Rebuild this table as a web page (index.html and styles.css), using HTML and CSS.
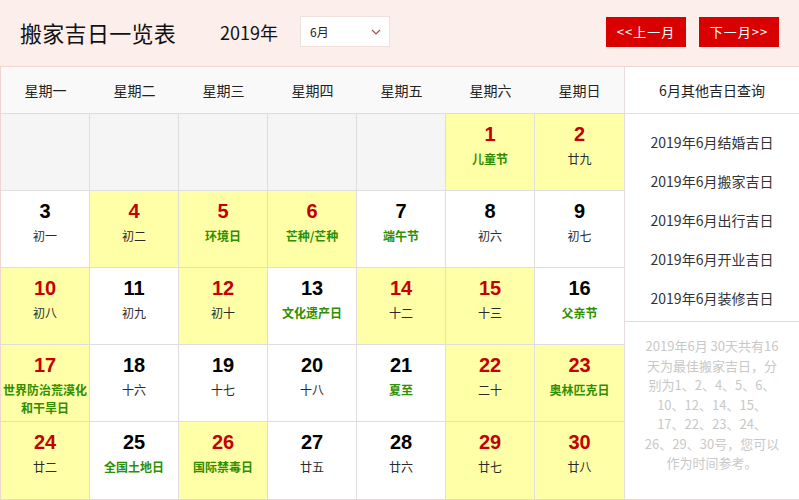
FILE: index.html
```html
<!DOCTYPE html>
<html lang="zh-CN">
<head>
<meta charset="utf-8">
<title>搬家吉日一览表</title>
<link rel="stylesheet" href="styles.css">
</head>
<body>
<div class="top">
  <h1 class="title">搬家吉日一览表</h1>
  <span class="year">2019年</span>
  <div class="select"><span>6月</span>
    <svg width="10" height="6" viewBox="0 0 10 6"><path d="M1 1 L5 5 L9 1" fill="none" stroke="#a5504c" stroke-width="1.2"/></svg>
  </div>
  <div class="nav">
    <a class="btn">&lt;&lt;上一月</a>
    <a class="btn">下一月&gt;&gt;</a>
  </div>
</div>
<div class="main">
  <div class="cal">
    <div class="wk">星期一</div><div class="wk">星期二</div><div class="wk">星期三</div><div class="wk">星期四</div><div class="wk">星期五</div><div class="wk">星期六</div><div class="wk">星期日</div>

    <div class="d empty"></div><div class="d empty"></div><div class="d empty"></div><div class="d empty"></div><div class="d empty"></div>
    <div class="d good"><b>1</b><span class="fest">儿童节</span></div>
    <div class="d good"><b>2</b><span>廿九</span></div>

    <div class="d"><b>3</b><span>初一</span></div>
    <div class="d good"><b>4</b><span>初二</span></div>
    <div class="d good"><b>5</b><span class="fest">环境日</span></div>
    <div class="d good"><b>6</b><span class="fest">芒种/芒种</span></div>
    <div class="d"><b>7</b><span class="fest">端午节</span></div>
    <div class="d"><b>8</b><span>初六</span></div>
    <div class="d"><b>9</b><span>初七</span></div>

    <div class="d good"><b>10</b><span>初八</span></div>
    <div class="d"><b>11</b><span>初九</span></div>
    <div class="d good"><b>12</b><span>初十</span></div>
    <div class="d"><b>13</b><span class="fest">文化遗产日</span></div>
    <div class="d good"><b>14</b><span>十二</span></div>
    <div class="d good"><b>15</b><span>十三</span></div>
    <div class="d"><b>16</b><span class="fest">父亲节</span></div>

    <div class="d good"><b>17</b><span class="fest">世界防治荒漠化和干旱日</span></div>
    <div class="d"><b>18</b><span>十六</span></div>
    <div class="d"><b>19</b><span>十七</span></div>
    <div class="d"><b>20</b><span>十八</span></div>
    <div class="d"><b>21</b><span class="fest">夏至</span></div>
    <div class="d good"><b>22</b><span>二十</span></div>
    <div class="d good"><b>23</b><span class="fest">奥林匹克日</span></div>

    <div class="d good"><b>24</b><span>廿二</span></div>
    <div class="d"><b>25</b><span class="fest">全国土地日</span></div>
    <div class="d good"><b>26</b><span class="fest">国际禁毒日</span></div>
    <div class="d"><b>27</b><span>廿五</span></div>
    <div class="d"><b>28</b><span>廿六</span></div>
    <div class="d good"><b>29</b><span>廿七</span></div>
    <div class="d good"><b>30</b><span>廿八</span></div>
  </div>
  <aside class="side">
    <div class="side-head">6月其他吉日查询</div>
    <ul class="links">
      <li>2019年6月结婚吉日</li>
      <li>2019年6月搬家吉日</li>
      <li>2019年6月出行吉日</li>
      <li>2019年6月开业吉日</li>
      <li>2019年6月装修吉日</li>
    </ul>
    <p class="note">2019年6月 30天共有16<br>天为最佳搬家吉日，分<br>别为1、2、4、5、6、<br>10、12、14、15、<br>17、22、23、24、<br>26、29、30号，您可以<br>作为时间参考。</p>
  </aside>
</div>
</body>
</html>
```

FILE: styles.css
```css
* { box-sizing: border-box; }
body {
  margin: 0;
  background: #fbeeeb;
  font-family: "Noto Sans CJK SC", "Noto Sans", sans-serif;
  color: #222;
}
.top {
  height: 66px;
  display: flex;
  align-items: center;
  padding: 0 20px 3px;
}
.title {
  margin: 0 44px 0 0;
  font-size: 22px;
  font-weight: normal;
  letter-spacing: 0.3px;
  color: #111;
}
.year {
  font-size: 18px;
  margin-right: 22px;
  color: #111;
}
.select {
  width: 90px;
  height: 31px;
  background: #fff;
  border: 1px solid #f2e0dc;
  display: flex;
  align-items: center;
  justify-content: space-between;
  padding: 0 8px 0 9px;
  font-size: 12px;
  color: #222;
}
.nav {
  margin-left: auto;
  display: flex;
  gap: 13px;
}
.btn {
  width: 80px;
  height: 30px;
  background: #d90000;
  color: #fff;
  font-size: 13px;
  display: flex;
  align-items: center;
  justify-content: center;
  letter-spacing: 1px;
}
.main {
  display: flex;
  border-top: 1px solid #f1d6d0;
  border-bottom: 1px solid #f1d6d0;
  background: #fff;
}
.cal {
  width: 624px;
  display: grid;
  grid-template-columns: repeat(7, 89px);
  grid-template-rows: 47px repeat(5, 77px);
  border-left: 1px solid #f1d6d0;
}
.wk {
  background: #f9f9f9;
  border-bottom: 1px solid #f1d6d0;
  display: flex;
  align-items: center;
  justify-content: center;
  font-size: 14px;
  color: #222;
}
.d {
  border-right: 1px solid #dedede;
  border-bottom: 1px solid #dedede;
  background: #fff;
  display: flex;
  flex-direction: column;
  align-items: center;
  padding-top: 7px;
  text-align: center;
}
.cal .d:nth-child(7n) { border-right: none; }
.cal > .d:nth-last-child(-n+7) { border-bottom: none; }
.d.empty { background: #f5f5f5; }
.d.good { background: #ffffa8; }
.d b {
  font-family: "Liberation Sans", Arial, sans-serif;
  font-size: 20px;
  font-weight: bold;
  line-height: 26px;
  color: #000;
}
.d.good b { color: #c40000; }
.d span {
  font-size: 12px;
  line-height: 18px;
  margin-top: 3px;
  color: #2a2a2a;
  padding: 0 1px;
}
.d span.fest { color: #2f8f00; font-weight: bold; }
.side {
  width: 175px;
  border-left: 1px solid #e8dcdc;
  display: flex;
  flex-direction: column;
}
.side-head {
  height: 47px;
  border-bottom: 1px solid #e8dcdc;
  display: flex;
  align-items: center;
  justify-content: center;
  font-size: 14px;
  color: #222;
}
.links {
  list-style: none;
  margin: 0;
  padding: 9px 0 3px;
  border-bottom: 1px solid #e0dada;
}
.links li {
  height: 39px;
  line-height: 39px;
  text-align: center;
  font-size: 14px;
  color: #333;
}
.note {
  margin: 0;
  padding: 14px 8px 0;
  font-size: 13px;
  line-height: 19.5px;
  color: #c8c8c8;
  text-align: center;
  white-space: nowrap;
}
```
